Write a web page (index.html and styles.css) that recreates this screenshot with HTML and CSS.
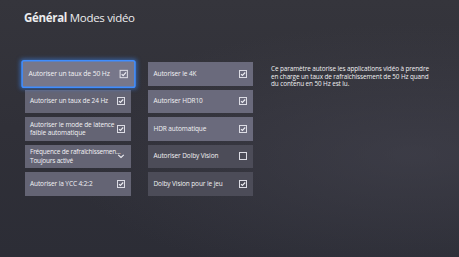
FILE: index.html
```html
<!DOCTYPE html>
<html lang="fr">
<head>
<meta charset="utf-8">
<link rel="stylesheet" href="styles.css">
</head>
<body>
<div class="screen">
  <div class="header"><span class="crumb">Général</span> Modes vidéo</div>
  <div class="main">
    <div class="col col-left">
      <div class="tile focused"><span class="label">Autoriser un taux de 50 Hz</span><span class="check"><svg viewBox="0 0 8 8"><path d="M2 4.1 L3.4 5.5 L6.2 2.5"/></svg></span></div>
      <div class="tile"><span class="label">Autoriser un taux de 24 Hz</span><span class="check"><svg viewBox="0 0 8 8"><path d="M2 4.1 L3.4 5.5 L6.2 2.5"/></svg></span></div>
      <div class="tile"><span class="label">Autoriser le mode de latence<br>faible automatique</span><span class="check"><svg viewBox="0 0 8 8"><path d="M2 4.1 L3.4 5.5 L6.2 2.5"/></svg></span></div>
      <div class="tile dropdown"><span class="label">Fréquence de rafraîchissemen...<br>Toujours activé</span><span class="chev"><svg viewBox="0 0 8 8"><path d="M1.2 2.8 L4 5.4 L6.8 2.8"/></svg></span></div>
      <div class="tile"><span class="label">Autoriser la YCC 4:2:2</span><span class="check"><svg viewBox="0 0 8 8"><path d="M2 4.1 L3.4 5.5 L6.2 2.5"/></svg></span></div>
    </div>
    <div class="col col-right">
      <div class="tile light"><span class="label">Autoriser le 4K</span><span class="check"><svg viewBox="0 0 8 8"><path d="M2 4.1 L3.4 5.5 L6.2 2.5"/></svg></span></div>
      <div class="tile light"><span class="label">Autoriser HDR10</span><span class="check"><svg viewBox="0 0 8 8"><path d="M2 4.1 L3.4 5.5 L6.2 2.5"/></svg></span></div>
      <div class="tile light"><span class="label">HDR automatique</span><span class="check"><svg viewBox="0 0 8 8"><path d="M2 4.1 L3.4 5.5 L6.2 2.5"/></svg></span></div>
      <div class="tile dark"><span class="label">Autoriser Dolby Vision</span><span class="check"></span></div>
      <div class="tile dark"><span class="label">Dolby Vision pour le jeu</span><span class="check"><svg viewBox="0 0 8 8"><path d="M2 4.1 L3.4 5.5 L6.2 2.5"/></svg></span></div>
    </div>
    <div class="desc">Ce paramètre autorise les applications vidéo à prendre<br>en charge un taux de rafraîchissement de 50 Hz quand<br>du contenu en 50 Hz est lu.</div>
  </div>
</div>
</body>
</html>
```
FILE: styles.css
```css
html, body {
  margin: 0;
  padding: 0;
}
body {
  width: 459px;
  height: 257px;
  overflow: hidden;
  font-family: "Open Sans", "Noto Sans", sans-serif;
  color: #f2f2f4;
}
.screen {
  width: 459px;
  height: 257px;
  box-sizing: border-box;
  background:
    radial-gradient(ellipse at 90% 60%, rgba(70,70,82,0.55), rgba(0,0,0,0) 60%),
    linear-gradient(180deg, #35353c 0%, #303038 50%, #2c2d36 100%);
}
.header {
  padding: 10px 0 0 24px;
  height: 20px;
  font-size: 11.5px;
  letter-spacing: -0.3px;
  color: #ececee;
}
.crumb {
  font-weight: 700;
}
.main {
  display: flex;
  margin-top: 32px;
  padding-left: 24.5px;
}
.col {
  display: flex;
  flex-direction: column;
  gap: 4px;
}
.col-left {
  width: 106.5px;
}
.col-right {
  width: 105px;
  margin-left: 17px;
}
.tile {
  height: 23.5px;
  box-sizing: border-box;
  padding: 0 6px 0 5.5px;
  display: flex;
  align-items: center;
  justify-content: space-between;
  background: #646474;
  font-size: 6.5px;
  line-height: 8px;
  letter-spacing: -0.1px;
}
.label {
  white-space: nowrap;
}
.tile.focused {
  background: #77778a;
  transform: scale(1.04);
  box-shadow: 0 0 0 1.5px #3f8dff, 0 0 4px 2px rgba(60,140,255,0.55);
  border-radius: 1px;
}
.tile.light {
  background: #6a6a7c;
}
.tile.dark {
  background: #4c4c58;
}
.tile.dropdown .label {
  flex: 1 1 0;
  min-width: 0;
  overflow: visible;
  line-height: 9px;
  letter-spacing: -0.2px;
}
.check {
  width: 8px;
  height: 8px;
  box-sizing: border-box;
  border: 1px solid #dcdce4;
  flex: none;
  display: block;
  position: relative;
}
.check svg {
  position: absolute;
  left: -1px;
  top: -1px;
  width: 8px;
  height: 8px;
  display: block;
}
.check svg path,
.chev svg path {
  fill: none;
  stroke: #eeeef4;
  stroke-width: 1.1;
}
.chev {
  width: 8px;
  height: 8px;
  flex: none;
  display: block;
}
.chev svg {
  display: block;
  width: 100%;
  height: 100%;
}
.desc {
  margin-left: 18px;
  margin-top: 3px;
  font-size: 6.4px;
  line-height: 7.6px;
  letter-spacing: -0.1px;
  color: #f0f0f2;
}
```
